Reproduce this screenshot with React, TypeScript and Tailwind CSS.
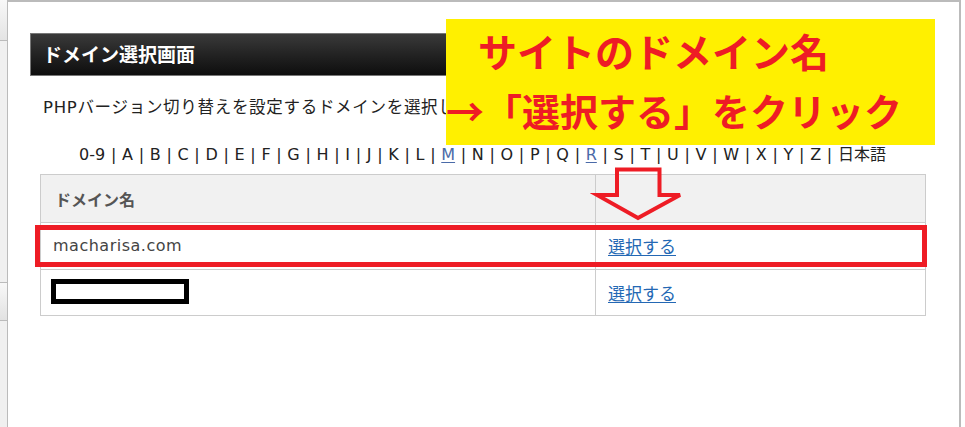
const jp = "font-['Noto_Sans_CJK_JP','Noto_Sans',sans-serif]";
const mixed = "font-['DejaVu_Sans','Noto_Sans_CJK_JP',sans-serif]";

const letters = ["0-9", "A", "B", "C", "D", "E", "F", "G", "H", "I", "J", "K", "L", "M", "N", "O", "P", "Q", "R", "S", "T", "U", "V", "W", "X", "Y", "Z", "日本語"];
const linked = ["M", "R"];

function LetterNav() {
  return (
    <div className={`mt-[26px] ml-[32px] flex w-[885px] justify-center text-[16px] leading-[20px] text-[#222] ${mixed}`}>
      {letters.map((l, i) => (
        <span key={l} className="flex">
          {linked.includes(l) ? (
            <span className="text-[#4a6aa8] underline underline-offset-2">{l}</span>
          ) : (
            <span>{l}</span>
          )}
          {i < letters.length - 1 && <span className="px-[5.7px]">|</span>}
        </span>
      ))}
    </div>
  );
}

function DomainTable() {
  return (
    <table className="mt-[9px] ml-[32px] w-[886px] border-collapse text-[16px]">
      <thead>
        <tr className="h-[48px] bg-[#f1f1f1]">
          <th className="w-[555px] border border-[#ccc] pl-[14px] text-left font-bold text-[#555]">ドメイン名</th>
          <th className="border border-[#ccc]" />
        </tr>
      </thead>
      <tbody>
        <tr className="h-[47px]">
          <td className={`border border-[#ccc] pl-[12px] tracking-[0.5px] text-[#444] ${mixed}`}>macharisa.com</td>
          <td className="border border-[#ccc] pl-[12px]">
            <a className="text-[17px] text-[#2468b4] underline underline-offset-2">選択する</a>
          </td>
        </tr>
        <tr className="h-[46px]">
          <td className="border border-[#ccc]" />
          <td className="border border-[#ccc] pl-[12px]">
            <a className="text-[17px] text-[#2468b4] underline underline-offset-2">選択する</a>
          </td>
        </tr>
      </tbody>
    </table>
  );
}

export default function App() {
  return (
    <div className={`relative flex h-[427px] w-[965px] overflow-hidden bg-white ${jp}`}>
      <div className="flex w-[8px] shrink-0 flex-col border-r border-[#bbb] bg-[#f0f0f0]">
        <div className="h-[41px] border-b border-[#bbb] bg-gradient-to-b from-[#f8f8f8] to-[#e4e4e4]" />
        <div className="h-[241px]" />
        <div className="h-[39px] border-y border-[#bbb] bg-gradient-to-b from-[#f8f8f8] to-[#e2e2e2]" />
      </div>

      <div className="w-[953px] shrink-0 border-t-2 border-r-2 border-[#bbb]">
        <div className="mt-[31px] ml-[22px] flex h-[43px] w-[895px] items-center border border-[#777] bg-gradient-to-b from-[#3a3a3a] to-[#0e0e0e] pl-[12px]">
          <h1 className="text-[19px] font-bold text-white">ドメイン選択画面</h1>
        </div>
        <p className={`mt-[21px] ml-[35px] text-[16.5px] leading-[22px] tracking-[0.7px] whitespace-nowrap text-[#222] ${mixed}`}>
          PHPバージョン切り替えを設定するドメインを選択してください。
        </p>
        <LetterNav />
        <DomainTable />
      </div>

      {/* annotations */}
      <div className="absolute top-[19px] left-[446px] flex h-[126px] w-[489px] flex-col bg-[#fff000] font-bold text-[#ee1c25]">
        <span className="mt-[1px] pl-[32px] text-[39px] leading-[60px]">サイトのドメイン名</span>
        <span className="text-[38px] leading-[60px]">→「選択する」をクリック</span>
      </div>
      <svg className="absolute top-[164px] left-[590px]" width="96" height="60" viewBox="590 164 96 60">
        <polygon points="617,169.5 659.5,169.5 659.5,195 680,195 638,218 597,195 617,195" fill="none" stroke="#ee1c25" strokeWidth="4" />
      </svg>
      <div className="absolute top-[225px] left-[35px] h-[42px] w-[892px] border-[5px] border-[#ee1c25]" />
      <div className="absolute top-[279px] left-[51px] h-[25px] w-[138px] border-[5px] border-black bg-white" />
    </div>
  );
}
